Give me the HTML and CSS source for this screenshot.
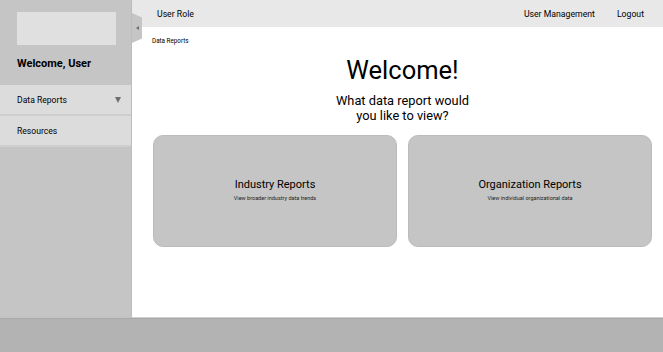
FILE: index.html
```html
<!doctype html>
<html>

<head>
  <title>Data Reports</title>
  <meta name="viewport" content="width=device-width, initial-scale=1.0">
  <link rel="stylesheet" href="styles.css">
</head>

<body>
  <div class="app">

    <!-- Sidebar -->
    <div class="sidebar">
      <div class="sidebar-top">
        <div class="logo-box"></div>
        <div class="welcome-user">Welcome, User</div>
      </div>
      <div class="menu-item">
        <span>Data Reports</span>
        <span class="caret"></span>
      </div>
      <div class="menu-item">
        <span>Resources</span>
      </div>
      <div class="collapse-tab">
        <span class="collapse-arrow"></span>
      </div>
    </div>

    <!-- Main Area -->
    <div class="main">
      <div class="topbar">
        <div class="topbar-role">User Role</div>
        <div class="topbar-links">
          <span>User Management</span>
          <span>Logout</span>
        </div>
      </div>

      <div class="content">
        <div class="breadcrumb">Data Reports</div>
        <h1 class="page-title">Welcome!</h1>
        <p class="page-question">What data report would<br>you like to view?</p>

        <div class="card-grid">
          <div class="report-card">
            <div class="card-title">Industry Reports</div>
            <div class="card-text">View broader industry data trends</div>
          </div>
          <div class="report-card">
            <div class="card-title">Organization Reports</div>
            <div class="card-text">View individual organizational data</div>
          </div>
        </div>
      </div>
    </div>
  </div>

  <div class="footer"></div>
</body>

</html>
```

FILE: styles.css
```css
body {
  margin: 0;
  padding: 0;
  font-family: Roboto, "Liberation Sans", sans-serif;
  color: #000;
  background-color: #fff;
}

.app {
  display: flex;
  height: 318px;
}

.sidebar {
  position: relative;
  width: 131px;
  flex-shrink: 0;
  background-color: #c5c5c5;
  border-right: 1px solid #bdbdbd;
}

.sidebar-top {
  height: 85px;
  padding: 12px 17px 0 17px;
  box-sizing: border-box;
}

.logo-box {
  width: 99px;
  height: 33px;
  background-color: #e0e0e0;
}

.welcome-user {
  margin-top: 12px;
  font-size: 11px;
  font-weight: bold;
}

.menu-item {
  display: flex;
  align-items: center;
  justify-content: space-between;
  height: 29px;
  padding: 0 10px 0 17px;
  background-color: #dcdcdc;
  border-bottom: 2px solid #cfcfcf;
  font-size: 8.6px;
}

.caret {
  width: 0;
  height: 0;
  margin-top: 1px;
  border-left: 3.5px solid transparent;
  border-right: 3.5px solid transparent;
  border-top: 6px solid #6e6e6e;
}

.collapse-tab {
  position: absolute;
  top: 13px;
  right: -11px;
  width: 10px;
  height: 30px;
  background-color: #c5c5c5;
  clip-path: polygon(0 0, 100% 15%, 100% 85%, 0 100%);
  display: flex;
  align-items: center;
  justify-content: center;
}

.collapse-arrow {
  width: 0;
  height: 0;
  border-top: 2.5px solid transparent;
  border-bottom: 2.5px solid transparent;
  border-right: 3px solid #6e6e6e;
}

.main {
  flex-grow: 1;
  min-width: 0;
  display: flex;
  flex-direction: column;
}

.topbar {
  height: 27px;
  display: flex;
  align-items: center;
  justify-content: space-between;
  padding: 0 19px 0 25px;
  background-color: #e8e8e8;
  font-size: 8.7px;
}

.topbar-links {
  display: flex;
  gap: 22px;
}

.content {
  flex-grow: 1;
  padding: 10px 11px 0 21px;
  border-bottom: 1px solid #d0d0d0;
}

.breadcrumb {
  font-size: 6.3px;
  margin-left: -1px;
}

.page-title {
  margin: 9px 0 0 0;
  text-align: center;
  font-size: 25.5px;
  font-weight: normal;
  line-height: 32px;
}

.page-question {
  margin: 7px 0 0 0;
  text-align: center;
  font-size: 12.8px;
  line-height: 15px;
}

.card-grid {
  display: grid;
  grid-template-columns: minmax(0, 1fr) minmax(0, 1fr);
  gap: 11px;
  margin-top: 12px;
}

.report-card {
  height: 112px;
  box-sizing: border-box;
  padding-bottom: 3px;
  background-color: #c5c5c5;
  border: 1px solid #bbbbbb;
  border-radius: 10px;
  display: flex;
  flex-direction: column;
  align-items: center;
  justify-content: center;
}

.card-title {
  font-size: 11px;
}

.card-text {
  margin-top: 4px;
  font-size: 5.5px;
  color: #222;
}

.footer {
  height: 34px;
  background-color: #b3b3b3;
  border-top: 1px solid #a9a9a9;
  box-sizing: border-box;
}
```
